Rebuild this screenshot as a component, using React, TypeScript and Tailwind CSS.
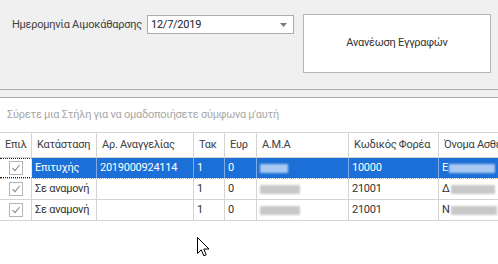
import React from "react";

const font = { fontFamily: 'Roboto, "Noto Sans", sans-serif' };

interface Col {
  key: string;
  label: string;
  w: string;
}

const columns: Col[] = [
  { key: "sel", label: "Επιλ", w: "w-[32px]" },
  { key: "status", label: "Κατάσταση", w: "w-[65px]" },
  { key: "num", label: "Αρ. Αναγγελίας", w: "w-[97px]" },
  { key: "tak", label: "Τακ", w: "w-[31px]" },
  { key: "eur", label: "Ευρ", w: "w-[32px]" },
  { key: "ama", label: "Α.Μ.Α", w: "w-[92px]" },
  { key: "code", label: "Κωδικός Φορέα", w: "w-[90px]" },
  { key: "name", label: "Όνομα Ασθενούς", w: "w-[120px]" },
];

const rows = [
  { status: "Επιτυχής", num: "2019000924114", tak: "1", eur: "0", code: "10000", amaW: "w-[28px]", nameW: "w-[46px]", first: "Ε" },
  { status: "Σε αναμονή", num: "", tak: "1", eur: "0", code: "21001", amaW: "w-[40px]", nameW: "w-[44px]", first: "Δ" },
  { status: "Σε αναμονή", num: "", tak: "1", eur: "0", code: "21001", amaW: "w-[40px]", nameW: "w-[46px]", first: "Ν" },
];

function Check() {
  return (
    <div className="w-[14px] h-[14px] border border-[#b4b4b4] bg-white flex items-center justify-center">
      <svg width="10" height="10" viewBox="0 0 10 10">
        <path d="M1.5 5.2 L4 7.6 L8.6 2" fill="none" stroke="#8a8a8a" strokeWidth="1.1" />
      </svg>
    </div>
  );
}

function Blur({ w, selected }: { w: string; selected: boolean }) {
  return (
    <div
      className={`${w} h-[9px] blur-[1px] ${selected ? "bg-[#a9c9f2]" : "bg-[#c8c8c8]"}`}
    />
  );
}

function Cursor() {
  return (
    <svg className="absolute left-[197px] top-[237px]" width="14" height="22" viewBox="0 0 14 22">
      <path
        d="M0.5 0.5 L0.5 16.5 L4.3 12.8 L6.8 18.8 L9.2 17.8 L6.8 12 L12 12 Z"
        fill="#fff"
        stroke="#000"
        strokeWidth="1"
      />
    </svg>
  );
}

export default function App() {
  return (
    <div
      className="relative w-[498px] h-[264px] overflow-hidden bg-white text-[11px] tracking-[-0.25px] text-[#3a3a3a]"
      style={font}
    >
      {/* Top panel */}
      <div className="h-[90px] bg-[#f0f0f0] border-b border-[#acacac] flex items-start pl-[12px] pt-[14px]">
        <span className="mt-[2px] leading-[18px] whitespace-nowrap text-[#404040]">Ημερομηνία Αιμοκάθαρσης</span>
        <div className="absolute left-[147px] top-[15px] w-[147px] h-[19px] bg-white border border-[#acacac] flex items-center pl-[3px] pr-[6px]">
          <span className="flex-1 leading-none text-[#222]">12/7/2019</span>
          <svg width="7" height="4" viewBox="0 0 7 4">
            <path d="M0 0 L7 0 L3.5 4 Z" fill="#7a7a7a" />
          </svg>
        </div>
        <button className="absolute left-[303px] top-[14px] w-[188px] h-[59px] bg-white border border-[#b4b4b4] text-[#333]">
          Ανανέωση Εγγραφών
        </button>
      </div>
      <div className="h-[8px] bg-[#f0f0f0] border-b border-[#acacac]" />

      {/* Group panel */}
      <div className="h-[35px] flex items-center pl-[7px] text-[#a8a8a8] whitespace-nowrap border-b border-[#d4d4d4]">
        Σύρετε μια Στήλη για να ομαδοποιήσετε σύμφωνα μ'αυτή
      </div>

      {/* Header */}
      <div className="flex h-[25px] border-b border-[#d4d4d4] whitespace-nowrap">
        {columns.map((c) => (
          <div
            key={c.key}
            className={`${c.w} shrink-0 flex items-center pl-[5px] border-r border-[#d4d4d4] text-[#404040] overflow-hidden`}
          >
            {c.label}
          </div>
        ))}
      </div>

      {/* Rows */}
      {rows.map((r, i) => {
        const sel = i === 0;
        const cell = `shrink-0 flex items-center pl-[3px] border-r overflow-hidden whitespace-nowrap ${
          sel ? "bg-[#1b6fd6] text-white border-[#7eabe6]" : "border-[#d4d4d4] text-[#333]"
        }`;
        return (
          <div
            key={i}
            className={`flex h-[21px] border-b ${sel ? "border-dotted border-[#e8a04a]" : "border-[#d4d4d4]"}`}
          >
            <div
              className={`w-[32px] shrink-0 flex items-center justify-center border-r border-[#d4d4d4] bg-white ${
                sel ? "border-y border-y-[#222] border-dotted" : ""
              }`}
            >
              <Check />
            </div>
            <div className={`${cell} w-[65px]`}>{r.status}</div>
            <div className={`${cell} w-[97px]`}>{r.num}</div>
            <div className={`${cell} w-[31px]`}>{r.tak}</div>
            <div className={`${cell} w-[32px]`}>{r.eur}</div>
            <div className={`${cell} w-[92px]`}>
              <Blur w={r.amaW} selected={sel} />
            </div>
            <div className={`${cell} w-[90px]`}>{r.code}</div>
            <div className={`${cell} w-[120px] gap-[1px]`}>
              <span>{r.first}</span>
              <Blur w={r.nameW} selected={sel} />
            </div>
          </div>
        );
      })}

      <Cursor />
    </div>
  );
}
